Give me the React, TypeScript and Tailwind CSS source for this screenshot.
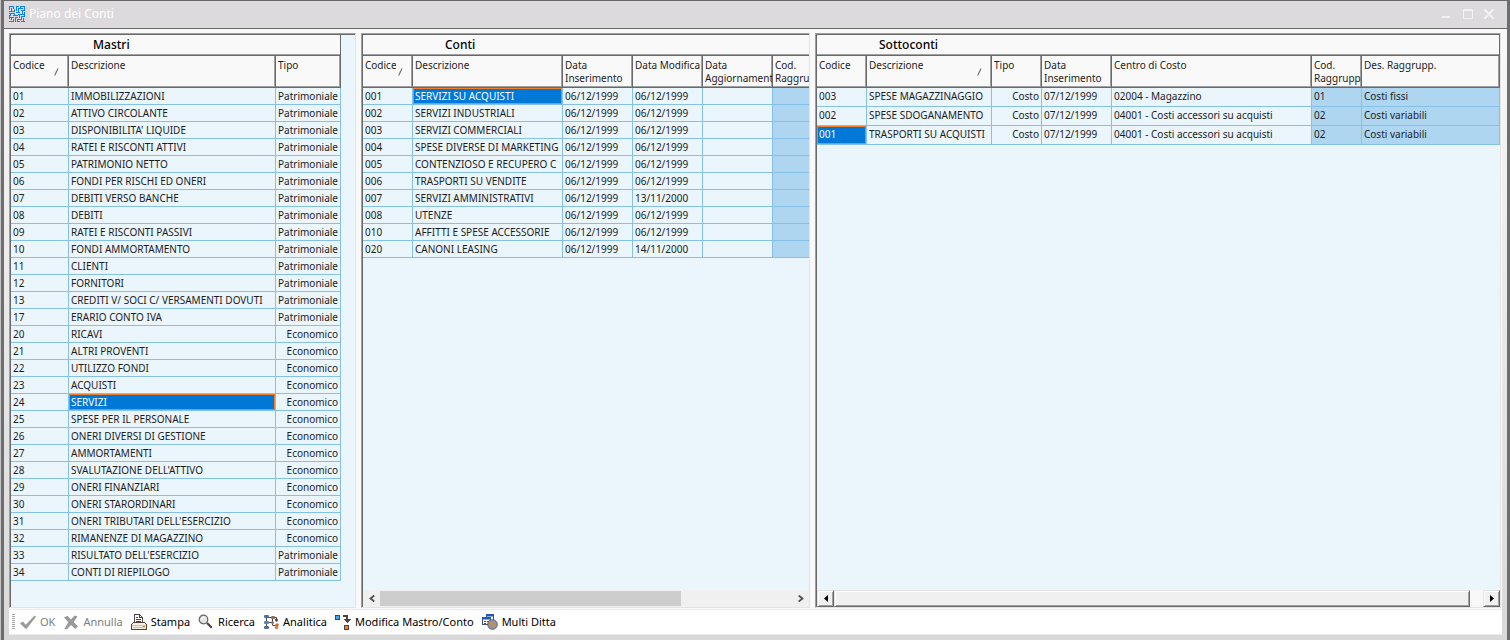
import React from 'react';
import { clsx } from 'clsx';

interface Column {
  label: string;
  width: string;
  align?: 'right';
  sorted?: boolean;
  muted?: boolean;
}

interface GridProps {
  title: string;
  titleClass: string;
  tableClass: string;
  rowClass: string;
  columns: Column[];
  rows: string[][];
  selected: [number, number];
  scrollbar?: React.ReactNode;
}

const P = 'Patrimoniale';
const E = 'Economico';

const mastriColumns: Column[] = [
  { label: 'Codice', width: 'w-[58px]', sorted: true },
  { label: 'Descrizione', width: 'w-[207px]' },
  { label: 'Tipo', width: 'w-[65px]', align: 'right' },
];

const mastriRows = [
  ['01', 'IMMOBILIZZAZIONI', P],
  ['02', 'ATTIVO CIRCOLANTE', P],
  ['03', "DISPONIBILITA' LIQUIDE", P],
  ['04', 'RATEI E RISCONTI ATTIVI', P],
  ['05', 'PATRIMONIO NETTO', P],
  ['06', 'FONDI PER RISCHI ED ONERI', P],
  ['07', 'DEBITI VERSO BANCHE', P],
  ['08', 'DEBITI', P],
  ['09', 'RATEI E RISCONTI PASSIVI', P],
  ['10', 'FONDI AMMORTAMENTO', P],
  ['11', 'CLIENTI', P],
  ['12', 'FORNITORI', P],
  ['13', 'CREDITI V/ SOCI C/ VERSAMENTI DOVUTI', P],
  ['17', 'ERARIO CONTO IVA', P],
  ['20', 'RICAVI', E],
  ['21', 'ALTRI PROVENTI', E],
  ['22', 'UTILIZZO FONDI', E],
  ['23', 'ACQUISTI', E],
  ['24', 'SERVIZI', E],
  ['25', 'SPESE PER IL PERSONALE', E],
  ['26', 'ONERI DIVERSI DI GESTIONE', E],
  ['27', 'AMMORTAMENTI', E],
  ['28', "SVALUTAZIONE DELL'ATTIVO", E],
  ['29', 'ONERI FINANZIARI', E],
  ['30', 'ONERI STARORDINARI', E],
  ['31', "ONERI TRIBUTARI DELL'ESERCIZIO", E],
  ['32', 'RIMANENZE DI MAGAZZINO', E],
  ['33', "RISULTATO DELL'ESERCIZIO", P],
  ['34', 'CONTI DI RIEPILOGO', P],
];

const contiColumns: Column[] = [
  { label: 'Codice', width: 'w-[50px]', sorted: true },
  { label: 'Descrizione', width: 'w-[150px]' },
  { label: 'Data Inserimento', width: 'w-[70px]' },
  { label: 'Data Modifica', width: 'w-[70px]' },
  { label: 'Data Aggiornament', width: 'w-[70px]' },
  { label: 'Cod. Raggrup', width: 'w-[50px]', muted: true },
];

const contiRows = [
  ['001', 'SERVIZI SU ACQUISTI', '06/12/1999', '06/12/1999', '', ''],
  ['002', 'SERVIZI INDUSTRIALI', '06/12/1999', '06/12/1999', '', ''],
  ['003', 'SERVIZI COMMERCIALI', '06/12/1999', '06/12/1999', '', ''],
  ['004', 'SPESE DIVERSE DI MARKETING', '06/12/1999', '06/12/1999', '', ''],
  ['005', 'CONTENZIOSO E RECUPERO C', '06/12/1999', '06/12/1999', '', ''],
  ['006', 'TRASPORTI SU VENDITE', '06/12/1999', '06/12/1999', '', ''],
  ['007', 'SERVIZI AMMINISTRATIVI', '06/12/1999', '13/11/2000', '', ''],
  ['008', 'UTENZE', '06/12/1999', '06/12/1999', '', ''],
  ['010', 'AFFITTI E SPESE ACCESSORIE', '06/12/1999', '06/12/1999', '', ''],
  ['020', 'CANONI LEASING', '06/12/1999', '14/11/2000', '', ''],
];

const sottocontiColumns: Column[] = [
  { label: 'Codice', width: 'w-[50px]' },
  { label: 'Descrizione', width: 'w-[125px]', sorted: true },
  { label: 'Tipo', width: 'w-[50px]', align: 'right' },
  { label: 'Data Inserimento', width: 'w-[70px]' },
  { label: 'Centro di Costo', width: 'w-[200px]' },
  { label: 'Cod. Raggrupp', width: 'w-[50px]', muted: true },
  { label: 'Des. Raggrupp.', width: 'w-auto', muted: true },
];

const sottocontiRows = [
  ['003', 'SPESE MAGAZZINAGGIO', 'Costo', '07/12/1999', '02004 - Magazzino', '01', 'Costi fissi'],
  ['002', 'SPESE SDOGANAMENTO', 'Costo', '07/12/1999', '04001 - Costi accessori su acquisti', '02', 'Costi variabili'],
  ['001', 'TRASPORTI SU ACQUISTI', 'Costo', '07/12/1999', '04001 - Costi accessori su acquisti', '02', 'Costi variabili'],
];

function SortMark() {
  return (
    <svg className="mt-[9px] mr-[6px] h-2 w-2 shrink-0" viewBox="0 0 8 8" fill="none">
      <path d="M4.5 .5l3 6.5H1" stroke="#fff" />
      <path d="M.7 7.5L4 .5" stroke="#777" strokeWidth="1.2" />
    </svg>
  );
}

function Grid({ title, titleClass, tableClass, rowClass, columns, rows, selected, scrollbar }: GridProps) {
  return (
    <section className="flex min-w-0 border border-t-[#a0a0a0] border-r-[#e3e3e3] border-b-[#e3e3e3] border-l-[#a0a0a0]">
      <div className="flex min-w-0 flex-1 flex-col overflow-hidden border-t border-l border-[#696969] bg-[#eaf5fc]">
        <div className="flex-1 overflow-hidden">
          <table className={clsx('table-fixed border-separate border-spacing-0', tableClass)}>
            <caption
              className={clsx(
                'h-[21px] border-r border-b border-[#696969] bg-[#f9f9f9] text-left text-xs leading-5 font-medium text-black shadow-[inset_0_-1px_#a0a0a0]',
                titleClass,
              )}
            >
              {title}
            </caption>
            <thead>
              <tr>
                {columns.map((col) => (
                  <th
                    key={col.label}
                    scope="col"
                    className={clsx(
                      'h-8 overflow-hidden border-r border-b border-[#696969] bg-[#f9f9f9] p-0 pt-[3px] pl-[2px] text-left align-top leading-[13px] font-normal shadow-[inset_-1px_-1px_#a0a0a0]',
                      col.width,
                    )}
                  >
                    <div className="flex gap-[2px]">
                      <span className="flex-1 overflow-hidden">{col.label}</span>
                      {col.sorted && <SortMark />}
                    </div>
                  </th>
                ))}
              </tr>
            </thead>
            <tbody>
              {rows.map((row, r) => (
                <tr key={row[0]}>
                  {row.map((value, c) => {
                    const active = selected[0] === r && selected[1] === c;
                    return (
                      <td
                        key={columns[c].label}
                        className={clsx(
                          'overflow-hidden border-r border-b border-[#84c0e8] px-[2px] py-0 align-top leading-4 whitespace-nowrap',
                          rowClass,
                          columns[c].align === 'right' && 'text-right',
                          columns[c].muted && 'bg-[#aed6f1]',
                          active && 'bg-[#0078d7] text-white shadow-[inset_0_0_0_1px_#f0802c]',
                        )}
                      >
                        {value}
                      </td>
                    );
                  })}
                </tr>
              ))}
            </tbody>
          </table>
        </div>
        {scrollbar}
      </div>
    </section>
  );
}

function FlatScrollbar() {
  return (
    <div className="flex h-[17px] bg-[#f0f0f0]">
      <button type="button" aria-label="Scorri a sinistra" className="flex w-[17px] items-center justify-center">
        <svg className="h-[7px] w-[6px]" viewBox="0 0 6 7" fill="none" stroke="#505050" strokeWidth="1.8">
          <path d="M5.3 .5L1.5 3.5l3.8 3" />
        </svg>
      </button>
      <div className="flex-1 pt-px">
        <div className="h-[15px] w-[73%] bg-[#cdcdcd]" />
      </div>
      <button type="button" aria-label="Scorri a destra" className="flex w-[17px] items-center justify-center">
        <svg className="h-[7px] w-[6px]" viewBox="0 0 6 7" fill="none" stroke="#505050" strokeWidth="1.8">
          <path d="M.7 .5l3.8 3-3.8 3" />
        </svg>
      </button>
    </div>
  );
}

const raised =
  'border border-t-[#e3e3e3] border-l-[#e3e3e3] border-r-[#696969] border-b-[#696969] bg-[#f0f0f0] shadow-[inset_1px_1px_#fff,inset_-1px_-1px_#a0a0a0]';

function ClassicScrollbar() {
  return (
    <div className="flex h-[17px] bg-[#f8f8f8]">
      <button type="button" aria-label="Scorri a sinistra" className={clsx('flex w-[17px] items-center justify-center', raised)}>
        <svg className="h-[7px] w-1" viewBox="0 0 4 7">
          <path d="M4 0v7L0 3.5z" />
        </svg>
      </button>
      <div className="flex-1">
        <div className={clsx('h-full w-[98%]', raised)} />
      </div>
      <button type="button" aria-label="Scorri a destra" className={clsx('flex w-[17px] items-center justify-center', raised)}>
        <svg className="h-[7px] w-1" viewBox="0 0 4 7">
          <path d="M0 0v7l4-3.5z" />
        </svg>
      </button>
    </div>
  );
}

function Logo() {
  return (
    <svg className="h-4 w-4" viewBox="0 0 16 16" fill="none" stroke="#0d84e3" shapeRendering="crispEdges">
      <path d="M0 .5h5M7 .5h3M12 .5h4M.5 0v4M4.5 0v3M2.5 2v3M7.5 0v5M9.5 2.5h4M11.5 0v3M15.5 0v5M0 5.5h6M5.5 3v3M9.5 2v5M11.5 4.5h4M7 6.5h4M13.5 4v4M1.5 7v3M0 7.5h5M3.5 9.5h5M5.5 7v3M8.5 8.5h4M10.5 8v4M12.5 8.5h3M15.5 6v5M0 11.5h5M.5 9v4M2.5 11v3M6.5 11v5M6 11.5h3M8.5 13.5h4M12.5 10v4M14.5 12v4M0 15.5h4M4.5 13v3M8.5 13v3M8 15.5h3M12 15.5h4M13 10.5h3" />
    </svg>
  );
}

function CheckIcon() {
  return (
    <svg className="h-4 w-4" viewBox="0 0 16 16" fill="#9a9a9a">
      <path d="M0 9.5l2.800-2 3 3.300L14.500 1.500l1.500 1.300L6.200 15.200z" />
    </svg>
  );
}

function CrossIcon() {
  return (
    <svg className="h-4 w-4" viewBox="0 0 16 16" fill="#9a9a9a">
      <path d="M1 3.500l3.500-1.700L8 5.500 11.500 1.500l3 1L10.700 8l4.300 4.500-2.800 2.500L8 11l-4 4.200H1.200L5.400 8.300z" />
    </svg>
  );
}

function PrintIcon() {
  return (
    <svg className="h-4 w-4" viewBox="0 0 16 16" fill="none" stroke="#54403f" shapeRendering="crispEdges">
      <path d="M3.500 8.500v-8h5l3 3v5" fill="#fff" />
      <path d="M8.500 .5v3h3M5 3.500h2M5 5.500h5M5 7.500h5" />
      <path d="M.5 10.500l2-2h11l2 2v5H.5z" fill="#f6efe2" />
      <path d="M1 11.500h14M2 13.500h12" stroke="#d8bea0" />
      <path d="M12 12.500h2" stroke="#e8862c" />
    </svg>
  );
}

function SearchIcon() {
  return (
    <svg className="h-4 w-4" viewBox="0 0 16 16" fill="none">
      <circle cx="5.500" cy="5.500" r="4.300" fill="#e4e7e8" stroke="#6b6260" strokeWidth="1.200" />
      <path d="M3.500 5.500a2 2 0 012-2" stroke="#fff" />
      <path d="M9 9l4.800 4.800" stroke="#54403f" strokeWidth="2.200" />
    </svg>
  );
}

function TreeIcon() {
  return (
    <svg className="h-4 w-4" viewBox="0 0 16 16">
      <path d="M3.500 2v12M3.500 8.500h5M3.500 3.500h10v4M9.500 4v7M9.500 11.500h3" fill="none" stroke="#54403f" />
      <rect x="1" y="1" width="5" height="3" rx="1" fill="#4e7396" />
      <rect x="1" y="7" width="5" height="3" rx="1" fill="#5b86b0" />
      <rect x="1" y="12" width="5" height="3" rx="1" fill="#4e7396" />
      <rect x="8" y="2" width="4" height="3" rx="1" fill="#8a7064" />
      <circle cx="13.500" cy="6" r="1.500" fill="#54403f" />
      <circle cx="9.500" cy="8.500" r="1.500" fill="#8a7064" />
      <circle cx="14" cy="11" r="1.800" fill="#d9662b" />
      <circle cx="13.500" cy="13.500" r="1.800" fill="#e0823f" />
    </svg>
  );
}

function MoveIcon() {
  return (
    <svg className="h-4 w-4" viewBox="0 0 16 16" fill="none" stroke="#54403f" shapeRendering="crispEdges">
      <path d="M.5 1.500h4v4h-4z" fill="#4da3f0" />
      <path d="M9.500 11.500h4v4h-4z" fill="#f08028" />
      <path d="M8 2h4v4" strokeWidth="2" />
      <path d="M8 5h8l-4 4z" fill="#54403f" stroke="none" />
    </svg>
  );
}

function CompaniesIcon() {
  return (
    <svg className="h-4 w-4" viewBox="0 0 16 16">
      <g stroke="#47516b" fill="#fff" shapeRendering="crispEdges">
        <path d="M4.500 .5h7v7h-7z" />
        <path d="M.5 3.500h8v7h-8z" />
      </g>
      <path d="M4 0h8v2.500H4zM0 3h9v2.500H0z" fill="#2458b8" />
      <path d="M2 7h2v1H2zM5 7h2v1H5zM2 9h2v1H2z" fill="#47516b" />
      <circle cx="10.500" cy="10.500" r="4.800" fill="#7b9cba" stroke="#6b5a58" />
      <path d="M7 8l3-1.500 1.500 3-2.500 3.500-2-1.500zM11.500 10l3 .5-1 3-2.500 .5z" fill="#c98b52" />
    </svg>
  );
}

const actions = [
  { label: 'OK', icon: <CheckIcon />, disabled: true },
  { label: 'Annulla', icon: <CrossIcon />, disabled: true },
  { label: 'Stampa', icon: <PrintIcon /> },
  { label: 'Ricerca', icon: <SearchIcon /> },
  { label: 'Analitica', icon: <TreeIcon /> },
  { label: 'Modifica Mastro/Conto', icon: <MoveIcon /> },
  { label: 'Multi Ditta', icon: <CompaniesIcon /> },
];

function TitleBar() {
  return (
    <header className="flex h-[29px] items-center border-t border-b border-[#696969] bg-[#dddadd] pr-[12px] pb-[2px] pl-[5px]">
      <Logo />
      <h1 className="flex-1 pl-1 text-xs text-white">Piano dei Conti</h1>
      <div className="flex gap-[9px]">
        <button type="button" aria-label="Riduci a icona">
          <svg className="h-3 w-3" viewBox="0 0 12 12" stroke="#f3f2f3" strokeWidth="2" fill="none">
            <path d="M1 9h8" />
          </svg>
        </button>
        <button type="button" aria-label="Ingrandisci">
          <svg className="h-3 w-3" viewBox="0 0 12 12" stroke="#f3f2f3" fill="none" shapeRendering="crispEdges">
            <path d="M1.500 1.500h9v9h-9zM1 2.500h10" />
          </svg>
        </button>
        <button type="button" aria-label="Chiudi">
          <svg className="h-3 w-3" viewBox="0 0 12 12" stroke="#f3f2f3" strokeWidth="2" fill="none">
            <path d="M1.500 1.500l9 9M10.500 1.500l-9 9" />
          </svg>
        </button>
      </div>
    </header>
  );
}

export default function App() {
  return (
    <div className="min-h-screen bg-[#c4c4c4] pl-px font-['Noto_Sans','Open_Sans',sans-serif] text-[10px] text-[#1c1c1c]">
      <div className="flex min-h-screen flex-col border-r-[3px] border-l-[3px] border-[#6e6e70] bg-linear-to-b from-[#f9f9f9] to-[#d9d9d9]">
        <TitleBar />
        <div className="mx-[5px] flex flex-1 flex-col bg-[#f9f9f9]">
          {/* Grids */}
          <main className="grid flex-1 grid-cols-[347fr_449fr_686fr] gap-[5px] pt-1 pr-px">
            <Grid
              title="Mastri"
              titleClass="pl-[82px]"
              tableClass="w-[330px]"
              rowClass="h-[17px]"
              columns={mastriColumns}
              rows={mastriRows}
              selected={[18, 1]}
            />
            <Grid
              title="Conti"
              titleClass="pl-[82px]"
              tableClass="w-[460px]"
              rowClass="h-[17px]"
              columns={contiColumns}
              rows={contiRows}
              selected={[0, 1]}
              scrollbar={<FlatScrollbar />}
            />
            <Grid
              title="Sottoconti"
              titleClass="pl-[62px]"
              tableClass="w-full"
              rowClass="h-[19px]"
              columns={sottocontiColumns}
              rows={sottocontiRows}
              selected={[2, 0]}
              scrollbar={<ClassicScrollbar />}
            />
          </main>

          {/* Toolbar */}
          <footer className="mt-px flex h-[26px] items-center border-t border-b border-[#ebebeb] bg-white pl-[3px] text-[11px]">
            <div className="h-4 w-[3px] bg-[repeating-linear-gradient(#a8a8a8_0_1px,transparent_1px_2px)]" />
            <div className="flex items-center gap-2 pl-[5px]">
              {actions.map((action) => (
                <button
                  key={action.label}
                  type="button"
                  disabled={action.disabled}
                  className="flex items-center gap-1 text-black disabled:text-[#7c7c7c]"
                >
                  {action.icon}
                  {action.label}
                </button>
              ))}
            </div>
          </footer>
        </div>
        <div className="h-[5px] bg-[#d9d9d9]" />
      </div>
    </div>
  );
}
